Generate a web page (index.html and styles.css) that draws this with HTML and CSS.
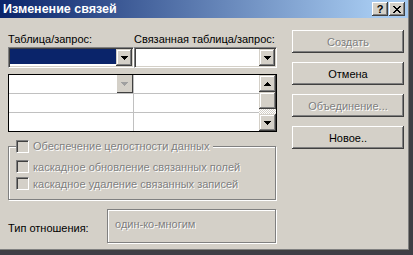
FILE: index.html
```html
<!DOCTYPE html>
<html lang="ru">
<head>
<meta charset="utf-8">
<link rel="stylesheet" href="styles.css">
</head>
<body>
<div class="window">
  <div class="titlebar">
    <span class="title">Изменение связей</span>
    <div class="tbtns">
      <span class="tbtn">?</span>
      <span class="tbtn"><svg width="8" height="7" viewBox="0 0 8 7" shape-rendering="crispEdges"><path d="M0 0h2v1h-2zM6 0h2v1h-2zM1 1h2v1h-2zM5 1h2v1h-2zM2 2h4v1h-4zM3 3h2v1h-2zM2 4h4v1h-4zM1 5h2v1h-2zM5 5h2v1h-2zM0 6h2v1h-2zM6 6h2v1h-2z" fill="#000"/></svg></span>
    </div>
  </div>
  <div class="content">
    <div class="left">
      <div class="labels"><span class="lab1">Таблица/запрос:</span><span>Связанная таблица/запрос:</span></div>
      <div class="combos">
        <div class="combo c1"><div class="field sel"></div><span class="ddbtn"><svg class="arr" width="7" height="4" viewBox="0 0 7 4" shape-rendering="crispEdges"><path d="M0 0h7v1h-7zM1 1h5v1h-5zM2 2h3v1h-3zM3 3h1v1h-1z" fill="#000"/></svg></span></div>
        <div class="combo c2"><div class="field"></div><span class="ddbtn"><svg class="arr" width="7" height="4" viewBox="0 0 7 4" shape-rendering="crispEdges"><path d="M0 0h7v1h-7zM1 1h5v1h-5zM2 2h3v1h-3zM3 3h1v1h-1z" fill="#000"/></svg></span></div>
      </div>
      <div class="grid">
        <div class="rows">
          <div class="row">
            <div class="cell ca"><span class="cellbtn"><svg width="7" height="4" viewBox="0 0 7 4" shape-rendering="crispEdges"><path d="M0 0h7v1h-7zM1 1h5v1h-5zM2 2h3v1h-3zM3 3h1v1h-1z" fill="#a0a0a0"/></svg></span></div>
            <div class="cell cb"></div>
          </div>
          <div class="row"><div class="cell ca"></div><div class="cell cb"></div></div>
          <div class="row last"><div class="cell ca"></div><div class="cell cb"></div></div>
        </div>
        <div class="vscroll">
          <span class="sbtn"><svg width="7" height="4" viewBox="0 0 7 4" shape-rendering="crispEdges"><path d="M3 0h1v1h-1zM2 1h3v1h-3zM1 2h5v1h-5zM0 3h7v1h-7z" fill="#000"/></svg></span>
          <span class="sbtn thumb"></span>
          <span class="track"></span>
          <span class="sbtn"><svg width="7" height="4" viewBox="0 0 7 4" shape-rendering="crispEdges"><path d="M0 0h7v1h-7zM1 1h5v1h-5zM2 2h3v1h-3zM3 3h1v1h-1z" fill="#000"/></svg></span>
        </div>
      </div>
      <fieldset class="group">
        <legend class="legend"><span class="chk"></span><span class="dis">Обеспечение целостности данных</span></legend>
        <div class="opt"><span class="chk"></span><span class="dis">каскадное обновление связанных полей</span></div>
        <div class="opt"><span class="chk"></span><span class="dis">каскадное удаление связанных записей</span></div>
      </fieldset>
      <div class="typerow">
        <span class="typelabel">Тип отношения:</span>
        <div class="typebox"><span class="dis">один-ко-многим</span></div>
      </div>
    </div>
    <div class="right">
      <div class="btn"><span class="dis">Создать</span></div>
      <div class="btn">Отмена</div>
      <div class="btn"><span class="dis">Объединение...</span></div>
      <div class="btn">Новое..</div>
    </div>
  </div>
</div>
</body>
</html>
```
FILE: styles.css
```css
html, body {
  margin: 0;
  padding: 0;
}
body {
  width: 413px;
  height: 255px;
  overflow: hidden;
  background: #3f3f46;
  font-family: "Liberation Sans", Arial, sans-serif;
  font-size: 11px;
  color: #000;
}
.window {
  width: 408px;
  height: 249px;
  background: #D4D0C8;
  border-right: 1px solid #808080;
  border-bottom: 1px solid #808080;
  box-shadow: 1px 1px 0 #404040;
}
.titlebar {
  height: 18px;
  background: linear-gradient(to right, #0A246A, #A6CAF0 92%);
  display: flex;
  align-items: center;
  justify-content: space-between;
  padding: 0 3px 0 3px;
}
.title {
  color: #fff;
  font-weight: bold;
  font-size: 12.5px;
}
.tbtns {
  display: flex;
  gap: 1px;
}
.tbtn {
  width: 16px;
  height: 14px;
  background: #D4D0C8;
  box-shadow: inset -1px -1px #404040, inset 1px 1px #fff, inset -2px -2px #808080, inset 2px 2px #D4D0C8;
  display: flex;
  align-items: center;
  justify-content: center;
  font-weight: bold;
  font-size: 11px;
  line-height: 1;
}
.content {
  display: flex;
  padding: 12px 0 0 8px;
}
.left {
  width: 269px;
  padding-top: 3px;
}
.labels {
  display: flex;
  height: 13px;
  line-height: 13px;
}
.lab1 {
  width: 126px;
}
.combos {
  display: flex;
  margin-top: 1px;
}
.combo {
  height: 21px;
  box-sizing: border-box;
  background: #fff;
  border: 1px solid;
  border-color: #808080 #fff #fff #808080;
  box-shadow: inset 1px 1px #404040, inset -1px -1px #D4D0C8;
  padding: 1px 1px 1px 1px;
  display: flex;
}
.c1 { width: 126px; }
.c2 { width: 143px; margin-left: 0; }
.field {
  flex: 1;
  margin-bottom: 2px;
}
.field.sel {
  background: #0A246A;
}
.ddbtn, .sbtn {
  width: 16px;
  height: 17px;
  background: #D4D0C8;
  box-shadow: inset -1px -1px #404040, inset 1px 1px #D4D0C8, inset -2px -2px #808080, inset 2px 2px #fff;
  display: flex;
  align-items: center;
  justify-content: center;
  flex: none;
}
.grid {
  margin-top: 6px;
  height: 58px;
  box-sizing: border-box;
  border: 1px solid #000;
  background: #fff;
  display: flex;
}
.rows {
  flex: 1;
  display: flex;
  flex-direction: column;
}
.row {
  height: 19px;
  box-sizing: border-box;
  border-bottom: 1px solid #C0C0C0;
  display: flex;
}
.row.last {
  border-bottom: 0;
  height: 18px;
}
.cell.ca {
  width: 125px;
  box-sizing: border-box;
  border-right: 1px solid #C0C0C0;
  display: flex;
  justify-content: flex-end;
}
.cell.cb {
  flex: 1;
}
.cellbtn {
  width: 16px;
  height: 18px;
  box-sizing: border-box;
  background: #D4D0C8;
  border-right: 1px solid #404040;
  border-bottom: 1px solid #404040;
  display: flex;
  align-items: center;
  justify-content: center;
}
.vscroll {
  width: 17px;
  display: flex;
  flex-direction: column;
}
.sbtn {
  width: 17px;
  height: 17px;
}
.track {
  flex: 1;
  background-color: #D4D0C8;
  background-image: repeating-conic-gradient(#fff 0 25%, #D4D0C8 0 50%);
  background-size: 2px 2px;
}
.group {
  margin: 7px 0 0 0;
  width: 268px;
  box-sizing: border-box;
  padding: 5px 7px 7px 7px;
  border: 1px solid #808080;
  box-shadow: inset 1px 1px #fff, 1px 1px #fff;
  min-width: 0;
}
.legend {
  padding: 0 4px 0 0;
  display: flex;
  align-items: center;
  gap: 4px;
  height: 14px;
  background: #D4D0C8;
}
.opt {
  height: 17px;
  display: flex;
  align-items: center;
  gap: 4px;
}
.chk {
  width: 13px;
  height: 13px;
  box-sizing: border-box;
  border: 1px solid;
  border-color: #808080 #fff #fff #808080;
  box-shadow: inset 1px 1px #404040, inset -1px -1px #D4D0C8;
  background: #D4D0C8;
  flex: none;
}
.dis {
  color: #808080;
  text-shadow: 1px 1px 0 #fff;
}
.typerow {
  margin-top: 9px;
  display: flex;
  align-items: center;
}
.typelabel {
  width: 99px;
  padding-top: 4px;
}
.typebox {
  width: 169px;
  height: 34px;
  box-sizing: border-box;
  border: 1px solid #808080;
  box-shadow: inset 1px 1px #fff, 1px 1px #fff;
  padding: 8px 0 0 7px;
  line-height: 13px;
}
.right {
  margin-left: 15px;
  display: flex;
  flex-direction: column;
  gap: 9px;
}
.btn {
  width: 112px;
  height: 23px;
  box-sizing: border-box;
  background: #D4D0C8;
  box-shadow: inset -1px -1px #404040, inset 1px 1px #fff, inset -2px -2px #808080, inset 2px 2px #D4D0C8;
  display: flex;
  align-items: center;
  justify-content: center;
}
```
